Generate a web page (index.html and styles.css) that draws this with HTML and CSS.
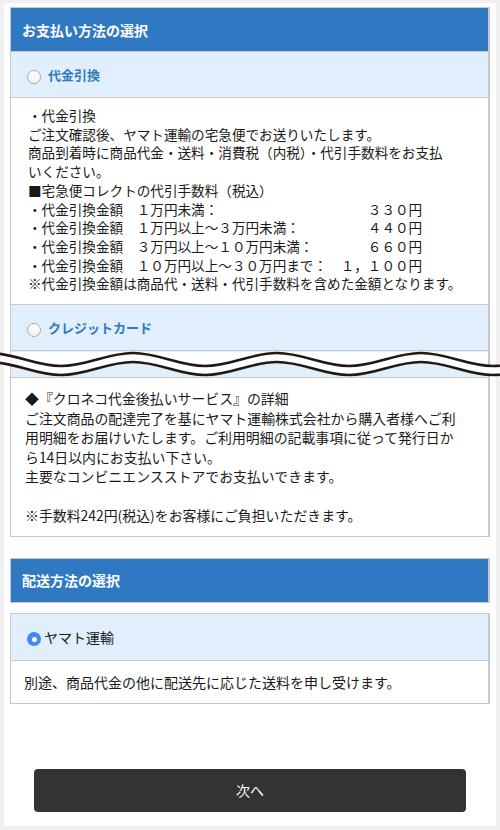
FILE: index.html
```html
<!DOCTYPE html>
<html lang="ja">
<head>
<meta charset="utf-8">
<title>お支払い方法の選択</title>
<link rel="stylesheet" href="styles.css">
</head>
<body>
<div class="page">
  <section class="panel">
    <div class="head">お支払い方法の選択</div>
    <div class="opt">
      <span class="radio"></span>
      <span class="opt-label">代金引換</span>
    </div>
    <div class="body1">・代金引換<br>ご注文確認後、ヤマト運輸の宅急便でお送りいたします。<br>商品到着時に商品代金・送料・消費税（内税）・代引手数料をお支払<br>いください。<br>■宅急便コレクトの代引手数料（税込）<br>・代金引換金額　１万円未満：　　　　　　　　　　　３３０円<br>・代金引換金額　１万円以上～３万円未満：　　　　　４４０円<br>・代金引換金額　３万円以上～１０万円未満：　　　　６６０円<br>・代金引換金額　１０万円以上～３０万円まで：　１，１００円<br>※代金引換金額は商品代・送料・代引手数料を含めた金額となります。</div>
    <div class="opt">
      <span class="radio"></span>
      <span class="opt-label">クレジットカード</span>
    </div>
    <div class="band"></div>
    <div class="body2">◆『クロネコ代金後払いサービス』の詳細<br>ご注文商品の配達完了を基にヤマト運輸株式会社から購入者様へご利<br>用明細をお届けいたします。ご利用明細の記載事項に従って発行日か<br>ら14日以内にお支払い下さい。<br>主要なコンビニエンスストアでお支払いできます。<br><br>※手数料242円(税込)をお客様にご負担いただきます。</div>
  </section>

  <div class="head head2">配送方法の選択</div>
  <section class="panel panel2">
    <div class="opt opt-sel">
      <span class="radio radio-on"></span>
      <span class="opt-label2">ヤマト運輸</span>
    </div>
    <div class="body3">別途、商品代金の他に配送先に応じた送料を申し受けます。</div>
  </section>

  <div class="actions">
    <button class="next" type="button">次へ</button>
  </div>
</div>

<svg class="wave" width="500" height="40" viewBox="0 0 500 40" xmlns="http://www.w3.org/2000/svg">
  <defs>
    <clipPath id="inside"><rect x="11" y="0" width="477" height="40"/></clipPath>
  </defs>
  <path clip-path="url(#inside)" fill="#ffffff" d="M -11 8 L 565 8 L 565 9 C 539 9, 519 22, 493 22 C 467 22, 447 9, 421 9 C 395 9, 375 22, 349 22 C 323 22, 303 9, 277 9 C 251 9, 231 22, 205 22 C 179 22, 159 9, 133 9 C 107 9, 87 22, 61 22 C 35 22, 15 9, -11 9 Z"/>
  <path fill="none" stroke="#ffffff" stroke-width="9" d="M -11 13.5 C 15 13.5, 35 26.5, 61 26.5 C 87 26.5, 107 13.5, 133 13.5 C 159 13.5, 179 26.5, 205 26.5 C 231 26.5, 251 13.5, 277 13.5 C 303 13.5, 323 26.5, 349 26.5 C 375 26.5, 395 13.5, 421 13.5 C 447 13.5, 467 26.5, 493 26.5 C 519 26.5, 539 13.5, 565 13.5"/>
  <path fill="none" stroke="#231815" stroke-width="2.6" d="M -11 9 C 15 9, 35 22, 61 22 C 87 22, 107 9, 133 9 C 159 9, 179 22, 205 22 C 231 22, 251 9, 277 9 C 303 9, 323 22, 349 22 C 375 22, 395 9, 421 9 C 447 9, 467 22, 493 22 C 519 22, 539 9, 565 9"/>
  <path fill="none" stroke="#231815" stroke-width="2.6" d="M -11 18 C 15 18, 35 31, 61 31 C 87 31, 107 18, 133 18 C 159 18, 179 31, 205 31 C 231 31, 251 18, 277 18 C 303 18, 323 31, 349 31 C 375 31, 395 18, 421 18 C 447 18, 467 31, 493 31 C 519 31, 539 18, 565 18"/>
</svg>
</body>
</html>
```

FILE: styles.css
```css
html, body {
  margin: 0;
  padding: 0;
}

body {
  background: #f0f0f0;
  font-family: "Noto Sans CJK JP", "Noto Sans", sans-serif;
  color: #1a1a1a;
  position: relative;
}

.page {
  margin: 3px 4px 4px;
  background: #ffffff;
  padding: 4px 6px 14px;
}

.panel {
  border: 1px solid #c8c8c8;
  border-right-width: 2px;
}

.head {
  background: #2e79c2;
  color: #ffffff;
  font-weight: bold;
  font-size: 14px;
  height: 43px;
  display: flex;
  align-items: center;
  padding-left: 11px;
  border-bottom: 1px solid #c8c8c8;
}

.head2 {
  margin-top: 21px;
  border: 1px solid #c8c8c8;
  border-right-width: 2px;
  height: 43px;
}

.opt {
  background: #e1eefc;
  height: 45px;
  display: flex;
  align-items: center;
  padding-left: 16px;
  gap: 7px;
  border-bottom: 1px solid #c8c8c8;
}

.radio {
  width: 12px;
  height: 12px;
  border-radius: 50%;
  border: 1px solid #a9a9a9;
  background: linear-gradient(#ffffff, #f1f1f1);
  margin-top: 5px;
  flex: none;
}

.opt-label {
  color: #2e79c2;
  font-weight: bold;
  font-size: 13px;
}

.body1 {
  padding: 8px 12px 11px 17px;
  font-size: 13.6px;
  line-height: 18.7px;
  white-space: nowrap;
  border-bottom: 1px solid #c8c8c8;
}

.band {
  height: 26px;
  background: #e1eefc;
  border-bottom: 1px solid #c8c8c8;
}

.body2 {
  padding: 11px 12px 10px 14px;
  font-size: 13.9px;
  line-height: 19.5px;
  white-space: nowrap;
}

.panel2 {
  margin-top: 10px;
}

.opt-sel {
  height: 46px;
  gap: 3px;
}

.radio-on {
  width: 14px;
  height: 14px;
  border: none;
  background: #3d8af0;
  display: flex;
  align-items: center;
  justify-content: center;
}

.radio-on::after {
  content: "";
  width: 5px;
  height: 5px;
  border-radius: 50%;
  background: #ffffff;
}

.opt-label2 {
  font-size: 14px;
  color: #1a1a1a;
}

.body3 {
  padding: 11px 12px 11px 13px;
  font-size: 14px;
  line-height: 20px;
  white-space: nowrap;
}

.actions {
  margin-top: 65px;
  display: flex;
  justify-content: center;
}

.next {
  width: 432px;
  height: 43px;
  background: #333333;
  color: #ffffff;
  border: none;
  border-radius: 4px;
  font-family: "Noto Sans CJK JP", sans-serif;
  font-size: 14px;
  padding: 0;
}

.wave {
  position: absolute;
  top: 344px;
  left: 0;
  display: block;
}
```
